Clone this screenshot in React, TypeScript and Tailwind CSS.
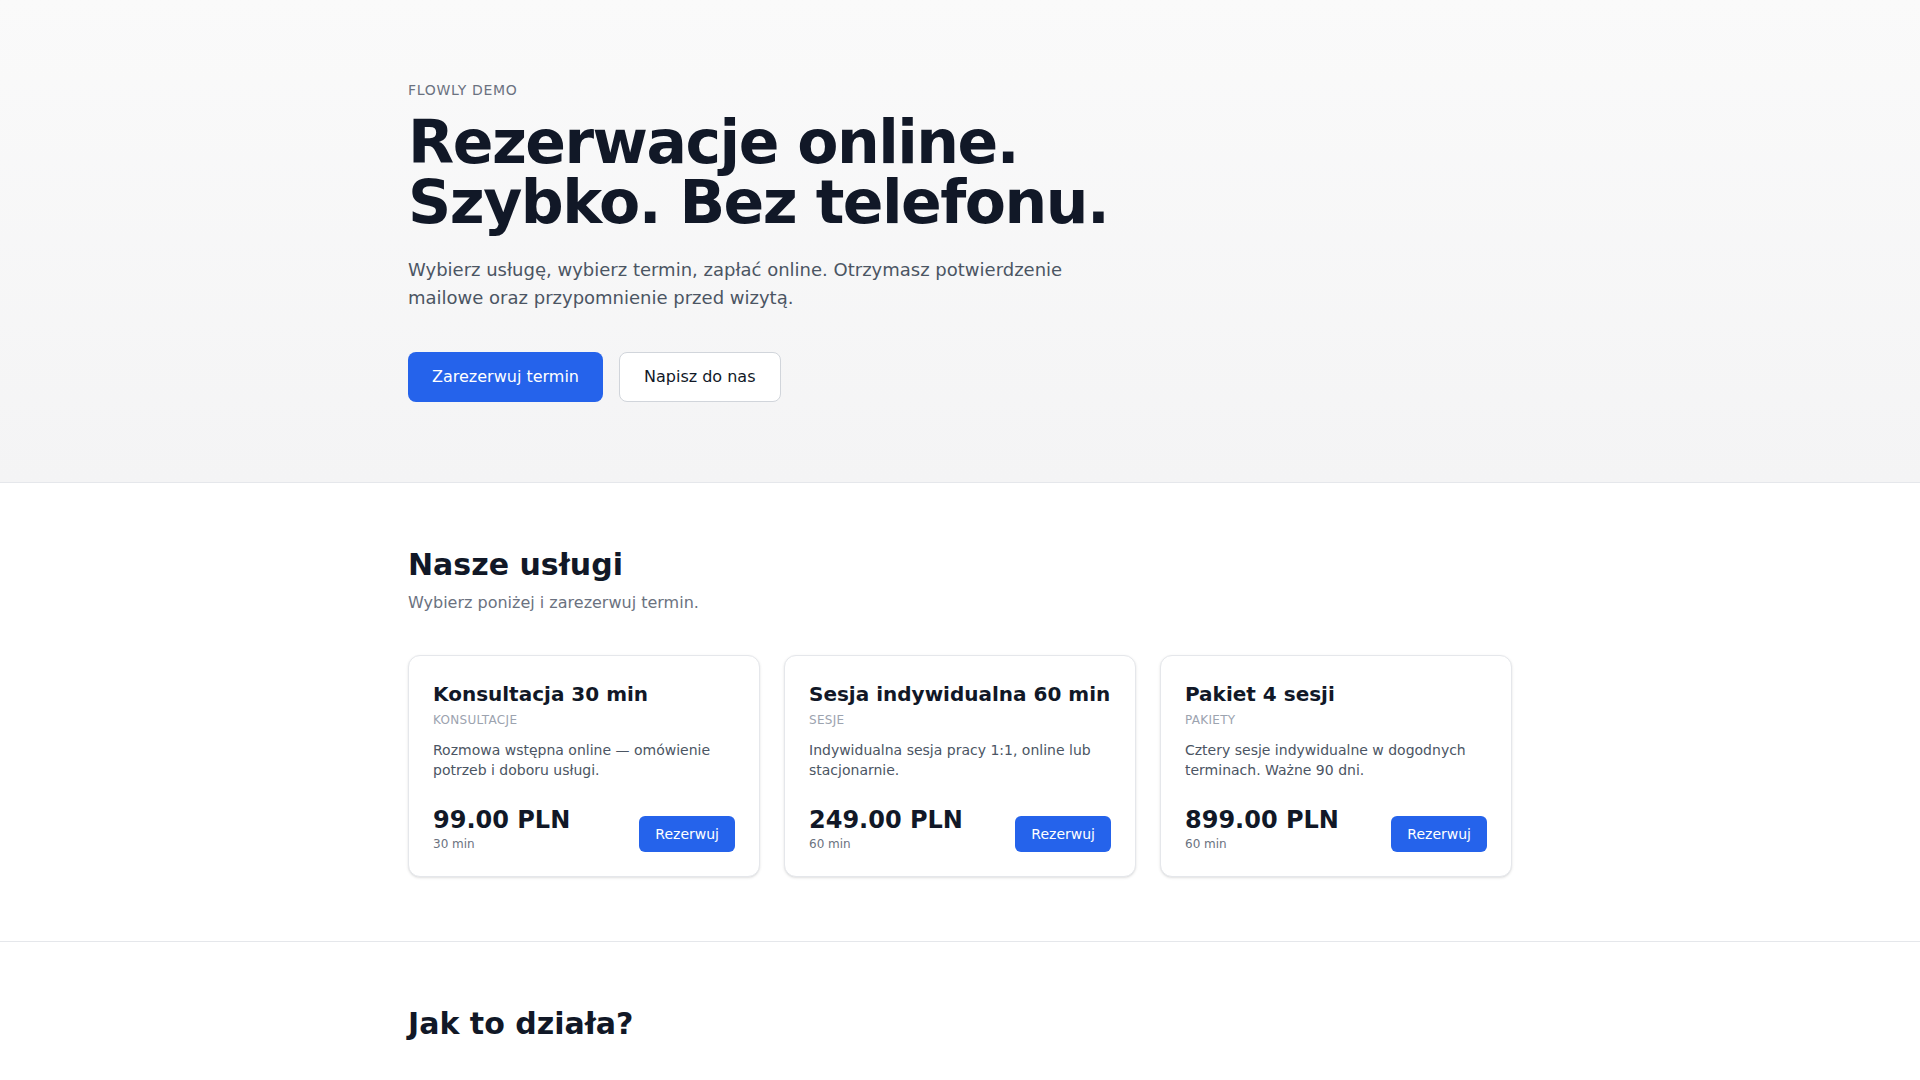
import React from 'react';

type Service = {
  name: string;
  category: string;
  description: string;
  price: string;
  duration: string;
};

const services: Service[] = [
  {
    name: 'Konsultacja 30 min',
    category: 'Konsultacje',
    description: 'Rozmowa wstępna online — omówienie potrzeb i doboru usługi.',
    price: '99.00 PLN',
    duration: '30 min',
  },
  {
    name: 'Sesja indywidualna 60 min',
    category: 'Sesje',
    description: 'Indywidualna sesja pracy 1:1, online lub stacjonarnie.',
    price: '249.00 PLN',
    duration: '60 min',
  },
  {
    name: 'Pakiet 4 sesji',
    category: 'Pakiety',
    description: 'Cztery sesje indywidualne w dogodnych terminach. Ważne 90 dni.',
    price: '899.00 PLN',
    duration: '60 min',
  },
];

const ServiceCard: React.FC<{ service: Service }> = ({ service }) => (
  <div className="rounded-xl border border-[#e5e7eb] bg-white p-6 shadow-sm">
    <h3 className="text-xl font-bold text-[#111827]">{service.name}</h3>
    <div className="mt-1 text-xs uppercase tracking-wide text-[#9ca3af]">{service.category}</div>
    <p className="mt-3 text-sm text-[#4b5563]">{service.description}</p>
    <div className="mt-6 flex items-end justify-between">
      <div>
        <div className="text-2xl font-bold text-[#111827]">{service.price}</div>
        <div className="text-xs text-[#6b7280]">{service.duration}</div>
      </div>
      <button className="rounded-md bg-[#2563eb] px-4 py-2 text-sm text-white">Rezerwuj</button>
    </div>
  </div>
);

export default function App() {
  return (
    <div className="min-h-screen bg-white font-['DejaVu_Sans',sans-serif] text-[#111827]">
      {/* Hero */}
      <section className="border-b border-[#e5e7eb] bg-gradient-to-b from-[#fafafa] to-[#f4f4f5]">
        <div className="mx-auto max-w-6xl px-6 py-20">
          <div className="text-sm uppercase tracking-wider text-[#6b7280]">Flowly demo</div>
          <h1 className="mt-3 text-6xl font-bold leading-none tracking-tight text-[#111827]">
            Rezerwacje online.
            <br />
            Szybko. Bez telefonu.
          </h1>
          <p className="mt-6 max-w-2xl text-lg text-[#4b5563]">
            Wybierz usługę, wybierz termin, zapłać online. Otrzymasz potwierdzenie mailowe oraz przypomnienie przed
            wizytą.
          </p>
          <div className="mt-10 flex gap-4">
            <button className="rounded-lg bg-[#2563eb] px-6 py-[13px] text-base text-white">Zarezerwuj termin</button>
            <button className="rounded-lg border border-[#d1d5db] bg-white px-6 py-3 text-base text-[#111827]">
              Napisz do nas
            </button>
          </div>
        </div>
      </section>

      {/* Usługi */}
      <section className="border-b border-[#e5e7eb]">
        <div className="mx-auto max-w-6xl px-6 py-16">
          <h2 className="text-3xl font-bold text-[#111827]">Nasze usługi</h2>
          <p className="mt-2 text-base text-[#6b7280]">Wybierz poniżej i zarezerwuj termin.</p>
          <div className="mt-10 grid grid-cols-3 gap-6">
            {services.map((s) => (
              <ServiceCard key={s.name} service={s} />
            ))}
          </div>
        </div>
      </section>

      {/* Jak to działa */}
      <section>
        <div className="mx-auto max-w-6xl px-6 py-16">
          <h2 className="text-3xl font-bold text-[#111827]">Jak to działa?</h2>
        </div>
      </section>
    </div>
  );
}
